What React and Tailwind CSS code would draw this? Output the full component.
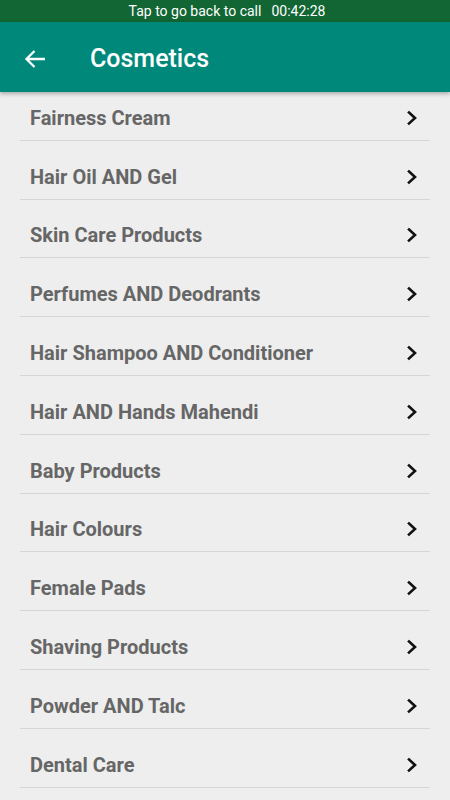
import React from "react";

const categories = [
  "Fairness Cream",
  "Hair Oil AND Gel",
  "Skin Care Products",
  "Perfumes AND Deodrants",
  "Hair Shampoo AND Conditioner",
  "Hair AND Hands Mahendi",
  "Baby Products",
  "Hair Colours",
  "Female Pads",
  "Shaving Products",
  "Powder AND Talc",
  "Dental Care",
];

function Chevron() {
  return (
    <svg width="14" height="16" viewBox="0 0 14 16" className="shrink-0">
      <path d="M4 2.5 L10 8 L4 13.5" fill="none" stroke="#111" strokeWidth="2.6" strokeLinecap="square" />
    </svg>
  );
}

export default function App() {
  return (
    <div className="w-[450px] h-[800px] overflow-hidden bg-[#eeeeee] flex flex-col" style={{ fontFamily: "Roboto, 'Liberation Sans', sans-serif" }}>
      <div className="h-[22px] shrink-0 bg-[#116633] flex items-center justify-center text-white text-[14px] leading-none">
        <span className="ml-[4px]">Tap to go back to call</span>
        <span className="ml-[10px]">00:42:28</span>
      </div>

      <div className="relative z-10 h-[70px] shrink-0 bg-[#00897b] flex items-center pt-[3px] shadow-[0_2px_4px_rgba(0,0,0,0.28)]">
        <svg width="22" height="22" viewBox="0 0 22 22" className="ml-[24px]">
          <path d="M21 11H3M10.5 3L2.5 11l8 8" fill="none" stroke="#fff" strokeWidth="2.3" />
        </svg>
        <h1 className="ml-[44px] text-white text-[25px] font-medium">Cosmetics</h1>
      </div>

      <div className="flex-1 overflow-hidden -mt-[10px]">
        {categories.map((name) => (
          <div key={name} className="mx-[20px] h-[58.8px] border-b border-[#d6d6d6] flex items-center justify-between pl-[10px] pr-[11px] pt-[14px]">
            <span className="text-[20px] font-bold text-[#666666]">{name}</span>
            <Chevron />
          </div>
        ))}
      </div>
    </div>
  );
}
